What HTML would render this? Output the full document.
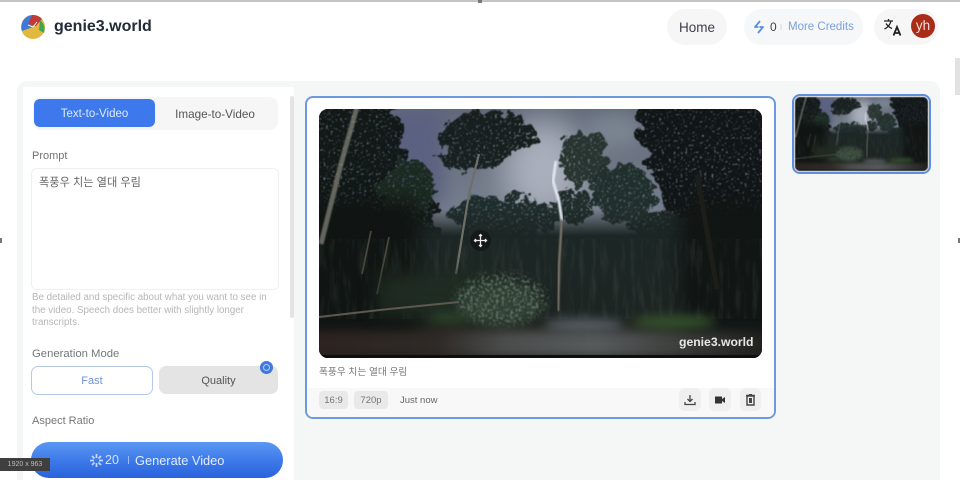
<!DOCTYPE html>
<html lang="en"><head><meta charset="utf-8"><title>genie3.world</title>
<style>
*{box-sizing:border-box;margin:0;padding:0}
html,body{width:960px;height:480px;overflow:hidden;background:#fff;font-family:"Liberation Sans","Noto Sans CJK KR",sans-serif}
.a{position:absolute}
.c{display:flex;align-items:center;justify-content:center}
.t{white-space:nowrap}
</style></head><body>
<div style="position:relative;width:960px;height:480px;overflow:hidden">
<div class="a" style="left:0;top:0;width:960px;height:2px;background:#c4c4c4"></div>
<div class="a" style="left:478px;top:0;width:4px;height:3px;background:#777"></div>
<div class="a" style="left:0;top:238px;width:2px;height:5px;background:#777"></div>
<div class="a" style="left:958px;top:238px;width:2px;height:5px;background:#777"></div>

<!-- logo -->
<svg class="a" style="left:20px;top:14px" width="26" height="26" viewBox="0 0 26 26">
<circle cx="13" cy="13" r="12" fill="#e0b93e"/>
<path d="M13 13L2 17A12 12 0 0 1 12 1Z" fill="#3f78d8"/>
<path d="M8 10L12 1A12 12 0 0 1 22 5L16 12Z" fill="#c23a33"/>
<path d="M20 6A12 12 0 0 1 24 19L19 16Z" fill="#3fa455"/>
<path d="M8 11L13 13L17 8" stroke="#eee" stroke-width="1" fill="none"/>
</svg>
<div class="a t" style="left:54px;top:17px;font-size:16px;line-height:20px;font-weight:700;color:#222b38">genie3.world</div>

<!-- header right -->
<div class="a c t" style="left:667px;top:9px;width:60px;height:36px;border-radius:18px;background:#f6f6f6;font-size:13.500px;color:#3b3f46">Home</div>
<div class="a" style="left:744px;top:9px;width:119px;height:36px;border-radius:18px;background:#f6f7f8"></div>
<svg class="a" style="left:752px;top:20px" width="14" height="14" viewBox="0 0 14 14"><path d="M8 1L3 7H6.500M6 13L11 7H7.500" fill="none" stroke="#5a8fe0" stroke-width="1.800" stroke-linejoin="round"/></svg>
<div class="a t" style="left:770px;top:20px;font-size:12px;line-height:14px;color:#444">0</div>
<div class="a" style="left:780px;top:24px;width:2px;height:6px;background:#e8e8e8"></div>
<div class="a t" style="left:788px;top:20px;font-size:11.500px;line-height:14px;color:#7b9fdd">More Credits</div>
<div class="a" style="left:874px;top:9px;width:64px;height:36px;border-radius:18px;background:#f6f6f6"></div>
<svg class="a" style="left:883px;top:17px" width="20" height="20" viewBox="0 0 20 20"><path d="M1 4H10M5.500 2V4M8 4C7 8 4.500 10.500 1.500 12M3 6.500C4.500 9 6.500 10.500 9 11.500" fill="none" stroke="#222" stroke-width="1.300"/><path d="M10.500 18.500L14 10L17.500 18.500M11.700 16H16.300" fill="none" stroke="#222" stroke-width="1.800"/></svg>
<div class="a c t" style="left:911px;top:14px;width:24px;height:24px;border-radius:50%;background:#a92c18;color:#f4dcd6;font-size:13.500px;line-height:22px">yh</div>

<!-- page scrollbar -->
<div class="a" style="left:955px;top:58px;width:5px;height:37px;background:#e2e2e2"></div>

<!-- main panels -->
<div class="a" style="left:17px;top:81px;width:923px;height:399px;border-radius:10px 10px 0 0;background:#f5f6f6"></div>
<div class="a" style="left:23px;top:87px;width:271px;height:393px;background:#fff"></div>
<div class="a" style="left:290px;top:96px;width:4px;height:222px;background:#e4e4e4;border-radius:2px"></div>

<!-- tabs -->
<div class="a" style="left:33px;top:97px;width:245px;height:33px;border-radius:8px;background:#f6f6f6"></div>
<div class="a c t" style="left:34px;top:99px;width:121px;height:28px;padding-top:2px;border-radius:6px;background:#3d79ec;color:#dfe9fb;font-size:11.500px">Text-to-Video</div>
<div class="a c t" style="left:155px;top:99px;width:120px;height:28px;padding-top:2px;color:#555;font-size:11.700px">Image-to-Video</div>

<div class="a t" style="left:32px;top:150px;font-size:11px;line-height:13px;color:#6f7276">Prompt</div>
<div class="a" style="left:31px;top:168px;width:248px;height:122px;border:1px solid #f0f0f0;border-radius:6px;background:#fff"></div>
<div class="a t" style="left:39px;top:176px;font-size:11.200px;line-height:14px;color:#666">폭풍우 치는 열대 우림</div>
<div class="a t" style="left:32px;top:292px;font-size:9.750px;line-height:12.500px;color:#b4b6b9">Be detailed and specific about what you want to see in<br>the video. Speech does better with slightly longer<br>transcripts.</div>

<div class="a t" style="left:32px;top:348px;font-size:11.300px;line-height:13px;color:#73787e">Generation Mode</div>
<div class="a c t" style="left:31px;top:366px;width:122px;height:29px;border:1px solid #b6c8ea;border-radius:7px;background:#fff;color:#6d93d8;font-size:11px">Fast</div>
<div class="a c t" style="left:159px;top:366px;width:119px;height:28px;padding-top:2px;border-radius:7px;background:#e4e4e4;color:#555;font-size:11px">Quality</div>
<div class="a" style="left:260px;top:361px;width:13px;height:13px;border-radius:50%;background:#3f78e0"></div>
<div class="a" style="left:263px;top:364px;width:7px;height:7px;border-radius:50%;border:1px solid #b9cff5"></div>

<div class="a t" style="left:32px;top:415px;font-size:11px;line-height:13px;color:#777">Aspect Ratio</div>
<div class="a" style="left:31px;top:442px;width:252px;height:36px;border-radius:18px;background:linear-gradient(#5c97f2,#3b78e8 55%,#2a62dc)"></div>
<svg class="a" style="left:89px;top:453px" width="15" height="15" viewBox="0 0 15 15"><path d="M7.500 1V5M7.500 10V14M1 7.500H5M10 7.500H14M3 3L5.500 5.500M9.500 9.500L12 12M12 3L9.500 5.500M5.500 9.500L3 12" stroke="#c5d8fa" stroke-width="1.700"/></svg>
<div class="a t" style="left:105px;top:453px;font-size:12.500px;line-height:15px;color:#d5e3fb">20</div>
<div class="a" style="left:128px;top:456px;width:1px;height:8px;background:#9dbcf3"></div>
<div class="a t" style="left:135px;top:453px;font-size:12.800px;line-height:15px;color:#e3ecfc">Generate Video</div>

<div class="a c t" style="left:0;top:458px;width:50px;height:13px;background:#3f3f3f;color:#bbb;font-size:7px">1920 x 963</div>

<!-- video card -->
<div class="a" style="left:305px;top:96px;width:471px;height:323px;border:2px solid #6d9ade;border-radius:8px;background:#fff;overflow:hidden"><div class="a" style="left:0;top:290px;width:467px;height:29px;background:#f8f8f8"></div></div>

<svg width="0" height="0" style="position:absolute">
<defs>
<filter id="fol" x="-15%" y="-15%" width="130%" height="130%" color-interpolation-filters="sRGB">
<feTurbulence type="fractalNoise" baseFrequency="0.08" numOctaves="4" seed="11" result="n1"/>
<feDisplacementMap in="SourceGraphic" in2="n1" scale="26" xChannelSelector="R" yChannelSelector="G" result="d"/>
<feTurbulence type="fractalNoise" baseFrequency="0.42" numOctaves="2" seed="4" result="n2"/>
<feColorMatrix in="n2" type="matrix" values="0 0 0 0 0 0 0 0 0 0 0 0 0 0 0 6 0 0 0 -1.350" result="m"/>
<feComposite in="d" in2="m" operator="in" result="c"/>
<feGaussianBlur in="c" stdDeviation=".55"/>
</filter>
<filter id="b1" color-interpolation-filters="sRGB"><feGaussianBlur stdDeviation=".7"/></filter>
<filter id="b4" x="-40%" y="-100%" width="180%" height="300%" color-interpolation-filters="sRGB"><feGaussianBlur stdDeviation="5"/></filter>
<filter id="b8" x="-40%" y="-40%" width="180%" height="180%" color-interpolation-filters="sRGB"><feGaussianBlur stdDeviation="9"/></filter>
<filter id="b14" x="-60%" y="-60%" width="220%" height="220%" color-interpolation-filters="sRGB"><feGaussianBlur stdDeviation="16"/></filter>
<filter id="sp" x="-10%" y="-10%" width="120%" height="120%" color-interpolation-filters="sRGB">
<feGaussianBlur in="SourceGraphic" stdDeviation="4" result="s"/>
<feTurbulence type="fractalNoise" baseFrequency="0.35" numOctaves="3" seed="3" result="n"/>
<feColorMatrix in="n" type="matrix" values="0 0 0 0 0 0 0 0 0 0 0 0 0 0 0 5 0 0 0 -2.400" result="m"/>
<feComposite in="s" in2="m" operator="in" result="c"/>
<feGaussianBlur in="c" stdDeviation=".5"/>
</filter>
<filter id="tex" x="0" y="0" width="100%" height="100%" color-interpolation-filters="sRGB">
<feTurbulence type="fractalNoise" baseFrequency="0.18 0.03" numOctaves="3" seed="8"/>
<feColorMatrix type="matrix" values="0 0 0 0 .33 0 0 0 0 .40 0 0 0 0 .36 2.500 0 0 0 -1.150"/>
</filter>
<linearGradient id="sky" x1="0" y1="0" x2="0" y2="1"><stop offset="0" stop-color="#626a7a"/><stop offset=".45" stop-color="#78818f"/><stop offset=".7" stop-color="#4d5a5a"/></linearGradient>
<linearGradient id="low" x1="0" y1="0" x2="0" y2="1"><stop offset="0" stop-color="#1c2523" stop-opacity="0"/><stop offset=".18" stop-color="#1c2624"/><stop offset=".7" stop-color="#1d2523"/><stop offset=".82" stop-color="#24251f"/><stop offset="1" stop-color="#211f1d"/></linearGradient>
<linearGradient id="rd" x1="0" y1="0" x2="1" y2="0"><stop offset="0" stop-color="#2c2320"/><stop offset=".28" stop-color="#2f2a27"/><stop offset=".42" stop-color="#4a4d4c"/><stop offset=".62" stop-color="#565b5c"/><stop offset=".82" stop-color="#3a3b39"/><stop offset="1" stop-color="#1e1e1b"/></linearGradient>
<symbol id="forest" viewBox="0 0 443 249" preserveAspectRatio="none">
<rect width="443" height="249" fill="url(#sky)"/>
<rect x="70" y="0" width="55" height="95" fill="#5b6180" filter="url(#b8)"/>
<ellipse cx="225" cy="60" rx="42" ry="50" fill="#a9afbb" filter="url(#b14)"/>
<ellipse cx="295" cy="22" rx="30" ry="18" fill="#7b8491" filter="url(#b8)"/>
<!-- leafy crowns -->
<g filter="url(#fol)">
<path d="M-25 -25H72L85 45C118 65 125 105 112 150H-25Z" fill="#111816"/>
<ellipse cx="88" cy="80" rx="28" ry="28" fill="#1b2a21"/>
<ellipse cx="168" cy="26" rx="48" ry="24" fill="#161f1d"/>
<ellipse cx="150" cy="50" rx="30" ry="9" fill="#182120"/>
<ellipse cx="266" cy="50" rx="24" ry="28" fill="#27342f"/>
<ellipse cx="255" cy="98" rx="18" ry="18" fill="#1f2c29"/>
<ellipse cx="305" cy="85" rx="32" ry="32" fill="#212f2c"/>
<ellipse cx="185" cy="108" rx="55" ry="22" fill="#1e2c2b"/>
<path d="M322 -25H468V150H365C345 90 330 50 320 30Z" fill="#101516"/>
<ellipse cx="350" cy="128" rx="38" ry="26" fill="#1c2a27"/>
</g>
<rect y="100" width="443" height="149" fill="url(#low)"/>
<rect x="-20" y="90" width="120" height="150" fill="#101513" filter="url(#b8)"/>
<rect x="360" y="90" width="100" height="150" fill="#111514" filter="url(#b8)"/>
<rect y="130" width="443" height="80" filter="url(#tex)" opacity=".22"/>
<!-- lightning -->
<path d="M237 52L234 72L240 92L243 112" stroke="#dfe5ef" stroke-width="3" fill="none" filter="url(#b1)"/>
<!-- trunks -->
<path d="M38 -2L22 55L12 95L2 135" stroke="#86857b" stroke-width="5" fill="none" opacity=".72" filter="url(#b1)"/>
<path d="M160 45L150 85L137 165" stroke="#6e6f68" stroke-width="2.200" fill="none"/>
<path d="M243 110L240 155L239 202" stroke="#797569" stroke-width="2.500" fill="none" filter="url(#b1)"/>
<path d="M70 128L58 185M52 122L43 165" stroke="#4d473e" stroke-width="1.700" fill="none"/>
<path d="M309 130L309 200" stroke="#4b4a42" stroke-width="2.500" fill="none" filter="url(#b1)"/>
<path d="M378 65L398 180" stroke="#1d1d19" stroke-width="5" fill="none"/>
<!-- bush -->
<rect x="60" y="165" width="110" height="40" fill="#1f2c22" filter="url(#b8)"/>
<ellipse cx="180" cy="195" rx="42" ry="22" fill="#2f3f33" filter="url(#b4)"/>
<g filter="url(#sp)"><ellipse cx="182" cy="190" rx="46" ry="26" fill="#5d6e60"/></g>
<!-- ground -->
<path d="M0 208L70 200L140 193" stroke="#5d594e" stroke-width="2" fill="none"/>
<rect x="-10" y="222" width="463" height="26" fill="url(#rd)" filter="url(#b4)"/>
<ellipse cx="265" cy="216" rx="40" ry="6" fill="#5a6068" filter="url(#b4)"/>
<ellipse cx="355" cy="213" rx="42" ry="7" fill="#34502c" filter="url(#b4)"/>
<ellipse cx="130" cy="209" rx="20" ry="4" fill="#2f4a2a" filter="url(#b4)"/>
<rect y="246" width="443" height="3" fill="#0e0e0e"/>
</symbol>
</defs>
</svg>

<div class="a" style="left:319px;top:109px;width:443px;height:249px;border-radius:9px;overflow:hidden;background:#111">
<svg width="443" height="249" style="display:block"><use href="#forest" width="443" height="249"/></svg>
</div>
<div class="a t" style="left:679px;top:335px;font-size:12.200px;line-height:15px;font-weight:700;color:#e6e6e6">genie3.world</div>
<div class="a" style="left:470px;top:230px;width:21px;height:21px;border-radius:50%;background:#151818"></div>
<svg class="a" style="left:473px;top:233px" width="15" height="15" viewBox="0 0 15 15"><path d="M7.500 1.500V13.500M1.500 7.500H13.500M6 3L7.500 1.500L9 3M6 12L7.500 13.500L9 12M3 6L1.500 7.500L3 9M12 6L13.500 7.500L12 9" stroke="#e8e8e8" stroke-width="1.300" fill="none"/></svg>

<div class="a t" style="left:319px;top:366px;font-size:9.700px;line-height:13px;color:#777">폭풍우 치는 열대 우림</div>
<div class="a c t" style="left:319px;top:391px;width:29px;height:18px;border-radius:4px;background:#e9e9e9;color:#777;font-size:9.500px">16:9</div>
<div class="a c t" style="left:354px;top:391px;width:34px;height:18px;border-radius:4px;background:#e9e9e9;color:#777;font-size:9.500px">720p</div>
<div class="a t" style="left:400px;top:395px;font-size:9.500px;line-height:12px;color:#666">Just now</div>
<div class="a" style="left:679px;top:388px;width:22px;height:23px;border-radius:6px;background:#efefef"></div>
<div class="a" style="left:709px;top:388px;width:22px;height:23px;border-radius:6px;background:#efefef"></div>
<div class="a" style="left:740px;top:388px;width:21px;height:23px;border-radius:6px;background:#efefef"></div>
<svg class="a" style="left:684px;top:394px" width="12" height="12" viewBox="0 0 12 12"><path d="M6 1V7.500M3.500 5L6 7.500L8.500 5M1 8V10.500H11V8" fill="none" stroke="#444" stroke-width="1.300"/></svg>
<svg class="a" style="left:714px;top:394px" width="12" height="12" viewBox="0 0 12 12"><path d="M1 2.500H8V9.500H1ZM8 5L11 3V9L8 7Z" fill="#333"/></svg>
<svg class="a" style="left:745px;top:394px" width="11" height="12" viewBox="0 0 11 12"><path d="M2 2V11H9V2ZM1 1.500H10M4 .5H7" fill="none" stroke="#444" stroke-width="1.400"/><rect x="4" y="4" width="3" height="5" fill="#444"/></svg>

<!-- thumbnail -->
<div class="a" style="left:792px;top:94px;width:139px;height:80px;border:2px solid #5f8fdc;border-radius:8px;background:#fff;padding:1px;overflow:hidden">
<svg width="133" height="74" viewBox="0 0 443 249" preserveAspectRatio="none" style="display:block;border-radius:5px;filter:blur(.4px)"><use href="#forest" width="443" height="249"/></svg>
</div>
</div>
</body></html>
